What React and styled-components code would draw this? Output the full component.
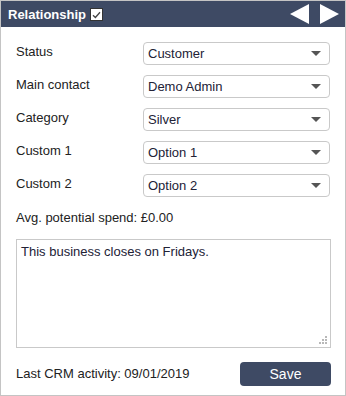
import React from "react";
import styled, { createGlobalStyle } from "styled-components";

const GlobalStyle = createGlobalStyle`
  html, body {
    margin: 0;
    padding: 0;
    background: #ffffff;
  }
  body {
    font-family: "Liberation Sans", Arial, sans-serif;
  }
`;

const Panel = styled.div`
  width: 346px;
  height: 396px;
  box-sizing: border-box;
  border: 1px solid #c4c4c4;
  background: #fff;
  display: flex;
  flex-direction: column;
`;

const Header = styled.div`
  height: 26px;
  background: #3e4a64;
  display: flex;
  align-items: center;
  padding: 0 6px 0 7px;
`;

const Title = styled.span`
  color: #fff;
  font-weight: bold;
  font-size: 13px;
`;

const Check = styled.span`
  width: 11px;
  height: 11px;
  margin-left: 4px;
  margin-top: 1px;
  background: #fff;
  border: 1px solid #333;
  display: flex;
  align-items: center;
  justify-content: center;
`;

const Arrows = styled.div`
  margin-left: auto;
  display: flex;
  gap: 9px;
`;

const Body = styled.div`
  flex: 1;
  padding: 15px 15px 0 15px;
  display: flex;
  flex-direction: column;
`;

const Row = styled.div`
  display: grid;
  grid-template-columns: 127px 187px;
  align-items: center;
  height: 23px;
  margin-bottom: 10px;
  color: #222;
  font-size: 13px;
`;

const Label = styled.span`
  position: relative;
  top: -2px;
`;

const Select = styled.div`
  height: 23px;
  box-sizing: border-box;
  border: 1px solid #c9c9c9;
  border-radius: 4px;
  display: flex;
  align-items: center;
  padding: 0 8px 0 4px;
  color: #222236;
  font-size: 13px;
`;

const Caret = styled.span`
  margin-left: auto;
  width: 0;
  height: 0;
  border-left: 5px solid transparent;
  border-right: 5px solid transparent;
  border-top: 5px solid #555;
`;

const Spend = styled.div`
  font-size: 13px;
  color: #222;
  margin-top: 3px;
`;

const Notes = styled.div`
  margin-top: 14px;
  height: 109px;
  width: 315px;
  box-sizing: border-box;
  border: 1px solid #c9c9c9;
  padding: 4px 4px;
  font-size: 13px;
  color: #222236;
  position: relative;
`;

const Grip = styled.svg`
  position: absolute;
  right: 2px;
  bottom: 2px;
`;

const Footer = styled.div`
  display: flex;
  align-items: center;
  justify-content: space-between;
  margin-top: 14px;
  width: 315px;
`;

const Activity = styled.span`
  font-size: 13px;
  color: #222;
  position: relative;
  top: -1px;
`;

const SaveButton = styled.button`
  width: 91px;
  height: 24px;
  border: none;
  border-radius: 4px;
  background: #3e4a64;
  color: #fff;
  font-family: "Liberation Sans", Arial, sans-serif;
  font-size: 14px;
  padding: 0;
`;

const fields = [
  ["Status", "Customer"],
  ["Main contact", "Demo Admin"],
  ["Category", "Silver"],
  ["Custom 1", "Option 1"],
  ["Custom 2", "Option 2"],
];

export default function App() {
  return (
    <>
      <GlobalStyle />
      <Panel>
        <Header>
          <Title>Relationship</Title>
          <Check>
            <svg width="9" height="8" viewBox="0 0 9 8">
              <path d="M1 4.2 L3.4 6.5 L8 1.2" fill="none" stroke="#444" strokeWidth="1.3" />
            </svg>
          </Check>
          <Arrows>
            <svg width="20" height="20" viewBox="0 0 20 20">
              <polygon points="19,0 19,20 0,10" fill="#fff" />
            </svg>
            <svg width="20" height="20" viewBox="0 0 20 20">
              <polygon points="1,0 1,20 20,10" fill="#fff" />
            </svg>
          </Arrows>
        </Header>
        <Body>
          {fields.map(([label, value]) => (
            <Row key={label}>
              <Label>{label}</Label>
              <Select>
                {value}
                <Caret />
              </Select>
            </Row>
          ))}
          <Spend>Avg. potential spend: £0.00</Spend>
          <Notes>
            This business closes on Fridays.
            <Grip width="9" height="9" viewBox="0 0 9 9">
              <rect x="6" y="0" width="2" height="2" fill="#b8b8b8" />
              <rect x="3" y="3" width="2" height="2" fill="#b8b8b8" />
              <rect x="6" y="3" width="2" height="2" fill="#b8b8b8" />
              <rect x="0" y="6" width="2" height="2" fill="#b8b8b8" />
              <rect x="3" y="6" width="2" height="2" fill="#b8b8b8" />
              <rect x="6" y="6" width="2" height="2" fill="#b8b8b8" />
            </Grip>
          </Notes>
          <Footer>
            <Activity>Last CRM activity: 09/01/2019</Activity>
            <SaveButton>Save</SaveButton>
          </Footer>
        </Body>
      </Panel>
    </>
  );
}
